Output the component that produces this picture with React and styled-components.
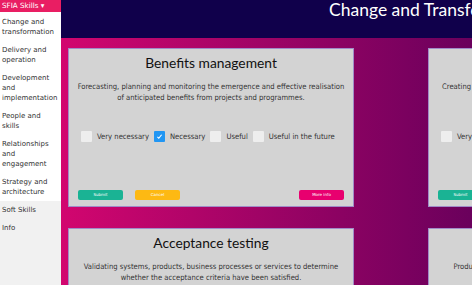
import React from "react";
import styled, { createGlobalStyle } from "styled-components";

const GlobalStyle = createGlobalStyle`
  html, body {
    margin: 0;
    padding: 0;
    overflow: hidden;
    background: #fff;
  }
`;

const Page = styled.div`
  display: flex;
  width: 472px;
  height: 285px;
  overflow: hidden;
  font-family: "DejaVu Sans Condensed", "DejaVu Sans", Verdana, sans-serif;
  font-stretch: condensed;
`;

const Sidebar = styled.nav`
  flex: 0 0 61px;
  width: 61px;
  display: flex;
  flex-direction: column;
  background: #f1f1f1;
  font-family: "DejaVu Sans", Verdana, sans-serif;
  font-stretch: normal;
`;

const MenuHead = styled.div`
  height: 12px;
  line-height: 12px;
  padding-left: 2px;
  background: #e91e63;
  color: #fff;
  font-size: 7.2px;
  white-space: nowrap;
`;

const SubMenu = styled.div`
  background: #fff;
  padding-top: 1px;
`;

const MenuItem = styled.div`
  padding: 4px 2px;
  font-size: 7px;
  line-height: 10px;
  color: #333;
`;

const Main = styled.main`
  flex: 1;
  display: flex;
  flex-direction: column;
  min-width: 0;
  background: linear-gradient(to right, #d2066f, #6a005c);
`;

const Header = styled.header`
  height: 38px;
  flex: 0 0 38px;
  background: #10004b;
  color: #fff;
  font-family: Lato, "Open Sans", sans-serif;
  font-stretch: normal;
  font-size: 17.5px;
  line-height: 20px;
  padding-left: 268px;
  white-space: nowrap;
  overflow: hidden;
`;

const Grid = styled.div`
  display: grid;
  grid-template-columns: 286px 286px;
  column-gap: 74px;
  row-gap: 21px;
  padding: 10px 0 0 7px;
`;

const Card = styled.section`
  box-sizing: border-box;
  height: 159px;
  background: #d3d3d3;
  border: 1px solid #a08cc8;
  padding: 0 8px 6px;
  display: flex;
  flex-direction: column;
`;

const Title = styled.h2`
  margin: 3px 0 0;
  text-align: center;
  font-family: Lato, "Open Sans", sans-serif;
  font-stretch: normal;
  font-weight: 400;
  font-size: 13.8px;
  line-height: 22px;
  color: #111;
  white-space: nowrap;
`;

const Desc = styled.p`
  margin: 7px 0 0;
  text-align: center;
  font-size: 7.6px;
  line-height: 11px;
  color: #333;
`;

const Options = styled.div`
  display: flex;
  align-items: center;
  gap: 5px;
  margin-top: 28px;
  padding-left: 4px;
  white-space: nowrap;
`;

const Box = styled.span`
  flex: 0 0 11px;
  width: 11px;
  height: 11px;
  box-sizing: border-box;
  border-radius: 1px;
  background: ${(p) => (p.checked ? "#2196f3" : "#eeeeee")};
  display: flex;
  align-items: center;
  justify-content: center;
`;

const Label = styled.span`
  font-size: 7.6px;
  color: #333;
`;

const Buttons = styled.div`
  display: flex;
  gap: 12px;
  margin-top: auto;
  padding: 0 1px;
`;

const Button = styled.button`
  width: 45px;
  height: 10px;
  padding: 0;
  border: none;
  border-radius: 2px;
  background: ${(p) => p.color};
  color: #fff;
  font-family: "DejaVu Sans", sans-serif;
  font-size: 4px;
  line-height: 10px;
  margin-left: ${(p) => (p.push ? "auto" : "0")};
`;

const options = ["Very necessary", "Necessary", "Useful", "Useful in the future"];

const skills = [
  {
    title: "Benefits management",
    desc: "Forecasting, planning and monitoring the emergence and effective realisation of anticipated benefits from projects and programmes.",
    checked: 1,
  },
  {
    title: "Business process improvement",
    desc: "Creating new and potentially disruptive approaches to performing business activities.",
    checked: -1,
  },
  {
    title: "Acceptance testing",
    desc: "Validating systems, products, business processes or services to determine whether the acceptance criteria have been satisfied.",
    checked: -1,
  },
  {
    title: "Business modelling",
    desc: "Producing abstract or distilled representations of real-world business scenarios to aid communication and understanding.",
    checked: -1,
  },
];

const menu = [
  "Change and transformation",
  "Delivery and operation",
  "Development and implementation",
  "People and skills",
  "Relationships and engagement",
  "Strategy and architecture",
];

const Tick = () => (
  <svg width="7" height="7" viewBox="0 0 10 10">
    <path d="M2 5.5 L4 7.5 L8 2.5" stroke="#fff" strokeWidth="1.6" fill="none" />
  </svg>
);

const SkillCard = ({ skill }) => (
  <Card>
    <Title>{skill.title}</Title>
    <Desc>{skill.desc}</Desc>
    <Options>
      {options.map((o, i) => (
        <React.Fragment key={o}>
          <Box checked={skill.checked === i}>{skill.checked === i && <Tick />}</Box>
          <Label>{o}</Label>
        </React.Fragment>
      ))}
    </Options>
    <Buttons>
      <Button color="#1ab394">Submit</Button>
      <Button color="#fdb913">Cancel</Button>
      <Button color="#e8006f" push>
        More info
      </Button>
    </Buttons>
  </Card>
);

export default function App() {
  return (
    <>
      <GlobalStyle />
      <Page>
        <Sidebar>
          <MenuHead>SFIA Skills ▾</MenuHead>
          <SubMenu>
            {menu.map((m) => (
              <MenuItem key={m}>{m}</MenuItem>
            ))}
          </SubMenu>
          <MenuItem>Soft Skills</MenuItem>
          <MenuItem>Info</MenuItem>
        </Sidebar>
        <Main>
          <Header>Change and Transformation</Header>
          <Grid>
            {skills.map((s) => (
              <SkillCard key={s.title} skill={s} />
            ))}
          </Grid>
        </Main>
      </Page>
    </>
  );
}
